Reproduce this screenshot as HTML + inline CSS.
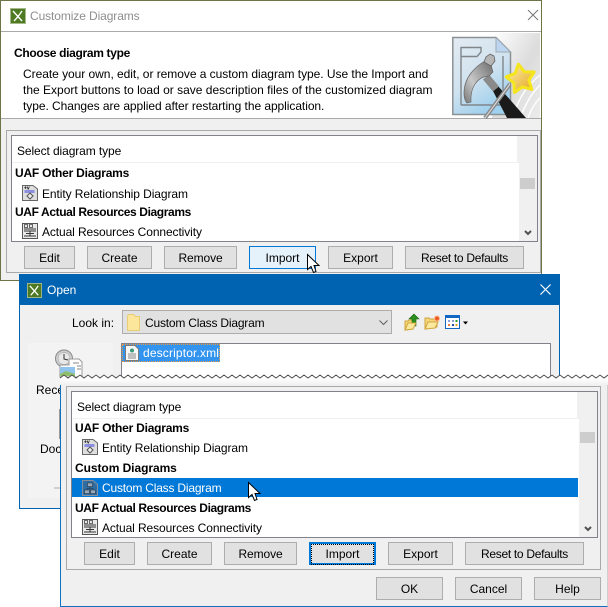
<!DOCTYPE html>
<html><head><meta charset="utf-8"><title>Customize Diagrams</title>
<style>
html,body{margin:0;padding:0;background:#fff;}
#p{position:relative;width:608px;height:607px;overflow:hidden;background:#fff;font:12px "Liberation Sans",sans-serif;color:#000;}
#p div{position:absolute;box-sizing:border-box;}
.t{white-space:nowrap;line-height:16px;height:16px;}
.b{font-weight:bold;}
.btn{height:23px;background:#e1e1e1;border:1px solid #adadad;text-align:center;line-height:23px;white-space:nowrap;}
svg{position:absolute;overflow:visible;}
</style></head><body><div id="p">

<!-- top dialog -->
<div style="left:0;top:0;width:542px;height:281px;background:#f0f0f0;border:1px solid #6f7448"></div>
<div style="left:1px;top:1px;width:540px;height:31px;background:#fff;border-bottom:1px solid #a9a9a9"></div>
<svg style="left:10px;top:8px" width="16" height="16" viewBox="0 0 16 16"><rect x=".5" y=".5" width="15" height="15" fill="#4d7a22" stroke="#a6b88a"/><path d="M3 3l9 10M12 3c-2 3-4 6-8 10" stroke="#fff" stroke-width="1.4" fill="none"/></svg>
<div class="t" style="left:30px;top:8px;color:#8e8e8e;letter-spacing:-.1px">Customize Diagrams</div>
<svg style="left:527px;top:9px" width="12" height="12"><path d="M1 1l10 10M11 1L1 11" stroke="#777" stroke-width="1" fill="none"/></svg>

<div style="left:1px;top:32px;width:540px;height:87px;background:#fff;border-bottom:1px solid #a9a9a9"></div>
<div class="t b" style="left:14px;top:45px;letter-spacing:-.32px">Choose diagram type</div>
<div class="t" style="left:23px;top:66px;letter-spacing:-.04px">Create your own, edit, or remove a custom diagram type. Use the Import and</div>
<div class="t" style="left:23px;top:82px">the Export buttons to load or save description files of the customized diagram</div>
<div class="t" style="left:23px;top:98px;letter-spacing:-.06px">type. Changes are applied after restarting the application.</div>

<!-- header art -->
<svg style="left:452px;top:33px" width="88" height="85" viewBox="0 0 88 85">
<defs>
<linearGradient id="bg" x1="0" y1="0" x2="1" y2="1"><stop offset="0" stop-color="#fff"/><stop offset=".55" stop-color="#dcdcdc"/><stop offset="1" stop-color="#ececec"/></linearGradient>
<linearGradient id="dc" x1="0" y1="0" x2=".5" y2="1"><stop offset="0" stop-color="#e4ebf2"/><stop offset=".6" stop-color="#cfe2ef"/><stop offset="1" stop-color="#9fd0ee"/></linearGradient>
<linearGradient id="hm" x1="0" y1="1" x2="1" y2="0"><stop offset="0" stop-color="#777"/><stop offset=".4" stop-color="#c8c8c8"/><stop offset="1" stop-color="#6a6a6a"/></linearGradient>
<linearGradient id="st" x1="0" y1="0" x2="1" y2="1"><stop offset="0" stop-color="#fff2b0"/><stop offset="1" stop-color="#e2a41c"/></linearGradient>
</defs>
<rect x="40" width="48" height="85" fill="url(#bg)"/>
<path d="M60 85C68 62 76 52 88 42M68 85C75 68 80 60 88 52M76 85c3-8 6-14 12-20" stroke="#fff" stroke-width="1.4" fill="none"/>
<path d="M.8 4.500H44L58.500 19V81.500H.8Z" fill="url(#dc)" stroke="#8c9196" stroke-width="1.500"/>
<path d="M44 4.500V19H58.500Z" fill="#bcd6f2" stroke="#a0a8b0"/>
<path d="M9 72V14.500H29V19L25 23.500H9M9 72H51V23" fill="none" stroke="#80858a" stroke-width="1.400"/>
<path d="M41 58L46 53 74 85H55Z" fill="#1a1a1a"/>
<path d="M34 44L44 56" stroke="#8a8a8a" stroke-width="8"/>
<path d="M33 28C24 33 12 44 12 60c0 5 1 8 3 10l4-1C18 56 24 44 37 43l4-4-2-7z" fill="url(#hm)" stroke="#666" stroke-width=".7"/>
<path d="M32 29l2-5 4-3 4 2 1 5-4 5z" fill="#b5b5b5" stroke="#555" stroke-width=".7"/>
<path d="M33 85L58 51" stroke="#8a8a8a" stroke-width="4"/>
<path d="M33 85L58 51" stroke="#e0e0e0" stroke-width="1"/>
<path d="M66.400 31.200L72.500 38.800 82.200 39 76.900 47.100 79.800 56.400 70.400 53.900 62.400 59.500 61.900 49.800 54.100 43.900 63.200 40.400Z" fill="url(#st)" stroke="#f5e51c" stroke-width="3" stroke-linejoin="round"/>
</svg>

<div style="left:6px;top:130px;width:535px;height:143px;border:1px solid #a9a9a9"></div>
<div style="left:11px;top:135px;width:527px;height:107px;background:#fff;border:1px solid #82838a"></div>
<div style="left:12px;top:162px;width:505px;height:1px;background:#f0f0f0"></div>
<div style="left:517px;top:136px;width:20px;height:105px;background:#f0f0f0"></div>
<div style="left:517px;top:163px;width:2px;height:78px;background:#fff"></div>
<div style="left:520px;top:178px;width:15px;height:11px;background:#cdcdcd"></div>
<svg style="left:524px;top:230px" width="8" height="7"><path d="M1 1l3 3 3-3" stroke="#505050" stroke-width="2" fill="none"/></svg>
<div class="t" style="left:17px;top:143px;letter-spacing:-.1px">Select diagram type</div>
<div class="t b" style="left:15px;top:165px;letter-spacing:-.22px">UAF Other Diagrams</div>
<svg style="left:22px;top:185px" width="16" height="16" viewBox="0 0 16 16"><path d="M.5.5H11l4.500 3.500V15.500H.5Z" fill="#dedede" stroke="#666"/><path d="M2.500 5h10V8h-10Z" fill="#8c8ee0"/><path d="M8 8l3 3-3 3-3-3z" fill="#eee" stroke="#555"/><text x="2" y="4.500" font-size="5" font-weight="bold">+v</text></svg>
<div class="t" style="left:42px;top:186px;letter-spacing:-.08px">Entity Relationship Diagram</div>
<div class="t b" style="left:15px;top:204px;letter-spacing:-.38px">UAF Actual Resources Diagrams</div>
<svg style="left:22px;top:223px" width="16" height="16" viewBox="0 0 16 16"><path d="M.5.5H15.500V15.500H.5Z" fill="#e9e9e9" stroke="#555"/><path d="M2 8h12M2 13h12M8 8v5M4 10.500h8M2 6h12" stroke="#333" fill="none"/><path d="M2.500 1.500h3v3h-3zM7.500 1.500h3v3h-3z" fill="none" stroke="#444" stroke-width=".8"/></svg>
<div class="t" style="left:42px;top:224px;letter-spacing:-.1px">Actual Resources Connectivity</div>

<div class="btn" style="left:24px;top:246px;width:51px">Edit</div>
<div class="btn" style="left:87px;top:246px;width:65px">Create</div>
<div class="btn" style="left:164px;top:246px;width:73px;letter-spacing:-.1px">Remove</div>
<div class="btn" style="left:249px;top:246px;width:67px;background:#e5f1fb;border-color:#0078d7">Import</div>
<div class="btn" style="left:328px;top:246px;width:65px">Export</div>
<div class="btn" style="left:405px;top:246px;width:119px;letter-spacing:-.3px">Reset to Defaults</div>
<svg style="left:307px;top:254px" width="15" height="20"><path d="M.500.500V15.500L4 12.500 6.500 18.500 9 17.500 7 11.500H12Z" fill="#fff" stroke="#000"/></svg>

<!-- open dialog -->
<div style="left:19px;top:274px;width:541px;height:235px;background:#f0f0f0;border:1px solid #0063b1;border-top:0"></div>
<div style="left:19px;top:274px;width:541px;height:31px;background:#0063b1"></div>
<svg style="left:27px;top:283px" width="15" height="15" viewBox="0 0 16 16"><rect x=".5" y=".5" width="15" height="15" fill="#4d7a22" stroke="#a6b88a"/><path d="M3 3l9 10M12 3c-2 3-4 6-8 10" stroke="#fff" stroke-width="1.4" fill="none"/></svg>
<div class="t" style="left:47px;top:282px;color:#fff">Open</div>
<svg style="left:540px;top:284px" width="11" height="11"><path d="M.500.500l10 10M10.500.500l-10 10" stroke="#fff" stroke-width="1.200" fill="none"/></svg>

<div class="t" style="left:72px;top:315px">Look in:</div>
<div style="left:122px;top:310px;width:270px;height:24px;background:#e1e1e1;border:1px solid #adadad"></div>
<svg style="left:127px;top:314px" width="14" height="17"><path d="M.500 2.500q0-2 2-2h4l2 2h4v14H.500Z" fill="#fbe69c" stroke="#e8cd72"/></svg>
<div class="t" style="left:145px;top:315px;letter-spacing:-.2px">Custom Class Diagram</div>
<svg style="left:379px;top:320px" width="9" height="6"><path d="M.500.500L4.500 4.500 8.500.500" stroke="#666" fill="none" stroke-width="1.100"/></svg>

<svg style="left:404px;top:313px" width="16" height="18"><path d="M1 8h3l1-1h4v9l-8 1z" fill="#f3d77a" stroke="#d0a63c"/><path d="M10 1L5 6H8V13H12V6H15Z" fill="#2a8f1c" stroke="#17650f" stroke-width=".6"/><path d="M1 17l3-7h8l-3 6z" fill="#fbe9a0" stroke="#d0a63c"/></svg>
<svg style="left:424px;top:315px" width="18" height="15"><path d="M1 3h4l1 1h7v8l-12 2z" fill="#f3d77a" stroke="#d0a63c"/><path d="M1 14l3-7h10l-3 6z" fill="#fbe9a0" stroke="#d0a63c"/><circle cx="13" cy="3.500" r="2.500" fill="#ee5a24" stroke="#fbb98a"/></svg>
<svg style="left:445px;top:315px" width="24" height="15"><rect x=".5" y=".5" width="14" height="13" fill="#fff" stroke="#1068c4"/><rect x="1" y="1" width="13" height="2" fill="#1068c4"/><path d="M3 5h2v2H3z" fill="#8aa0d8"/><path d="M7 5h2v2H7z" fill="#8aa0d8"/><path d="M10.500 5h2v2h-2z" fill="#2a9a2a"/><path d="M3 9h2v2H3z" fill="#ee7a3c"/><path d="M7 9h2v2H7z" fill="#1c4fa0"/><path d="M10.500 9h2v2h-2z" fill="#dca520"/><path d="M18 6.500h5l-2.500 3z" fill="#000"/></svg>

<div style="left:28px;top:343px;width:85px;height:155px;background:#f3f3f3"></div>
<svg style="left:55px;top:350px" width="30" height="28" viewBox="0 0 30 28"><circle cx="9" cy="8.500" r="8.500" fill="#cfcfcf" stroke="#888"/><circle cx="9" cy="8.500" r="6" fill="#e8e8e8" stroke="#999" stroke-width=".5"/><path d="M9 4v5l4 1" stroke="#333" fill="none"/><path d="M14 9h10l3 3v15H5V15h9z" fill="#fdfdfd" stroke="#9a9a9a"/><rect x="5" y="17" width="15" height="9" fill="#8ec3ee"/><path d="M5 24l6-3 9 3v2H5z" fill="#8fbf6c"/><path d="M18 13h6M22 16h4M22 19h4" stroke="#888"/></svg>
<div class="t" style="left:36px;top:382px">Recent Items</div>
<div style="left:59px;top:409px;width:1px;height:30px;background:#999"></div>
<div class="t" style="left:40px;top:441px">Documents</div>
<svg style="left:54px;top:484px" width="7" height="8"><path d="M0 4h6" stroke="#c4c4c4" stroke-width="1.500"/></svg>

<div style="left:121px;top:343px;width:430px;height:150px;background:#fff;border:1px solid #82838a"></div>
<div style="left:122px;top:344px;width:98px;height:18px;background:#3394f0;border:1px dotted #ec9a3e"></div>
<svg style="left:125px;top:345px" width="14" height="16"><path d="M.500.500H10L13.500 4V15.500H.500Z" fill="#f8f8f8" stroke="#7b7b7b"/><circle cx="7" cy="5.500" r="2" fill="#3a9a7a"/><path d="M3 9h8M3 11h8M3 13h8" stroke="#888"/></svg>
<div class="t" style="left:143px;top:345px;color:#fff;letter-spacing:.15px">descriptor.xml</div>

<!-- second overlay -->
<div style="left:60px;top:378px;width:548px;height:229px;background:#f0f0f0;border:1px solid #1170c0;border-top:0;border-right-color:#cfcfcf"></div>
<svg style="left:60px;top:371px" width="548" height="14" viewBox="0 0 548 14">
<defs><linearGradient id="wg" x1="0" y1="0" x2="0" y2="1"><stop offset=".3" stop-color="#fff"/><stop offset="1" stop-color="#f0f0f0"/></linearGradient></defs>
<path fill="url(#wg)" stroke="none" d="M0 14V7L4 4 8 7 12 4 16 7 20 4 24 7 28 4 32 7 36 4 40 7 44 4 48 7 52 4 56 7 60 4 64 7 68 4 72 7 76 4 80 7 84 4 88 7 92 4 96 7 100 4 104 7 108 4 112 7 116 4 120 7 124 4 128 7 132 4 136 7 140 4 144 7 148 4 152 7 156 4 160 7 164 4 168 7 172 4 176 7 180 4 184 7 188 4 192 7 196 4 200 7 204 4 208 7 212 4 216 7 220 4 224 7 228 4 232 7 236 4 240 7 244 4 248 7 252 4 256 7 260 4 264 7 268 4 272 7 276 4 280 7 284 4 288 7 292 4 296 7 300 4 304 7 308 4 312 7 316 4 320 7 324 4 328 7 332 4 336 7 340 4 344 7 348 4 352 7 356 4 360 7 364 4 368 7 372 4 376 7 380 4 384 7 388 4 392 7 396 4 400 7 404 4 408 7 412 4 416 7 420 4 424 7 428 4 432 7 436 4 440 7 444 4 448 7 452 4 456 7 460 4 464 7 468 4 472 7 476 4 480 7 484 4 488 7 492 4 496 7 500 4 504 7 508 4 512 7 516 4 520 7 524 4 528 7 532 4 536 7 540 4 544 7 548 4V14Z"/>
<path fill="none" stroke="#444" stroke-width=".9" d="M0 7L4 4 8 7 12 4 16 7 20 4 24 7 28 4 32 7 36 4 40 7 44 4 48 7 52 4 56 7 60 4 64 7 68 4 72 7 76 4 80 7 84 4 88 7 92 4 96 7 100 4 104 7 108 4 112 7 116 4 120 7 124 4 128 7 132 4 136 7 140 4 144 7 148 4 152 7 156 4 160 7 164 4 168 7 172 4 176 7 180 4 184 7 188 4 192 7 196 4 200 7 204 4 208 7 212 4 216 7 220 4 224 7 228 4 232 7 236 4 240 7 244 4 248 7 252 4 256 7 260 4 264 7 268 4 272 7 276 4 280 7 284 4 288 7 292 4 296 7 300 4 304 7 308 4 312 7 316 4 320 7 324 4 328 7 332 4 336 7 340 4 344 7 348 4 352 7 356 4 360 7 364 4 368 7 372 4 376 7 380 4 384 7 388 4 392 7 396 4 400 7 404 4 408 7 412 4 416 7 420 4 424 7 428 4 432 7 436 4 440 7 444 4 448 7 452 4 456 7 460 4 464 7 468 4 472 7 476 4 480 7 484 4 488 7 492 4 496 7 500 4 504 7 508 4 512 7 516 4 520 7 524 4 528 7 532 4 536 7 540 4 544 7 548 4"/>
</svg>

<div style="left:66px;top:386px;width:535px;height:184px;border:1px solid #a9a9a9"></div>
<div style="left:71px;top:391px;width:527px;height:147px;background:#fff;border:1px solid #82838a"></div>
<div style="left:72px;top:418px;width:505px;height:1px;background:#f0f0f0"></div>
<div style="left:577px;top:392px;width:20px;height:145px;background:#f0f0f0"></div>
<div style="left:577px;top:419px;width:2px;height:118px;background:#fff"></div>
<div style="left:580px;top:432px;width:15px;height:11px;background:#cdcdcd"></div>
<svg style="left:584px;top:526px" width="8" height="7"><path d="M1 1l3 3 3-3" stroke="#505050" stroke-width="2" fill="none"/></svg>
<div class="t" style="left:77px;top:399px;letter-spacing:-.1px">Select diagram type</div>
<div class="t b" style="left:75px;top:420px;letter-spacing:-.22px">UAF Other Diagrams</div>
<svg style="left:82px;top:439px" width="16" height="16" viewBox="0 0 16 16"><path d="M.5.5H11l4.500 3.500V15.500H.5Z" fill="#dedede" stroke="#666"/><path d="M2.500 5h10V8h-10Z" fill="#8c8ee0"/><path d="M8 8l3 3-3 3-3-3z" fill="#eee" stroke="#555"/><text x="2" y="4.500" font-size="5" font-weight="bold">+v</text></svg>
<div class="t" style="left:102px;top:440px;letter-spacing:-.08px">Entity Relationship Diagram</div>
<div class="t b" style="left:75px;top:460px;letter-spacing:-.06px">Custom Diagrams</div>
<div style="left:72px;top:478px;width:506px;height:19px;background:#0078d7"></div>
<svg style="left:82px;top:480px" width="16" height="16" viewBox="0 0 16 16"><path d="M.500.500H11l4.500 4V15.500H.500Z" fill="#2f6da3" stroke="#87909a"/><path d="M5.500 3h5v3.500h-5zM2.500 10h5v3.500h-5zM8.500 10h5v3.500h-5z" fill="#97a9ba" stroke="#26323e" stroke-width=".6"/><path d="M8 6.500V8.500H5V10M8 8.500h3V10" stroke="#26323e" fill="none" stroke-width=".6"/></svg>
<div class="t" style="left:102px;top:480px;color:#fff;letter-spacing:-.2px">Custom Class Diagram</div>
<svg style="left:248px;top:482px" width="15" height="20"><path d="M.500.500V15.500L4 12.500 6.500 18.500 9 17.500 7 11.500H12Z" fill="#fff" stroke="#000"/></svg>
<div class="t b" style="left:75px;top:500px;letter-spacing:-.38px">UAF Actual Resources Diagrams</div>
<svg style="left:82px;top:519px" width="16" height="16" viewBox="0 0 16 16"><path d="M.5.5H15.500V15.500H.5Z" fill="#e9e9e9" stroke="#555"/><path d="M2 8h12M2 13h12M8 8v5M4 10.500h8M2 6h12" stroke="#333" fill="none"/><path d="M2.500 1.500h3v3h-3zM7.500 1.500h3v3h-3z" fill="none" stroke="#444" stroke-width=".8"/></svg>
<div class="t" style="left:102px;top:520px;letter-spacing:-.1px">Actual Resources Connectivity</div>

<div class="btn" style="left:84px;top:542px;width:51px">Edit</div>
<div class="btn" style="left:147px;top:542px;width:65px">Create</div>
<div class="btn" style="left:224px;top:542px;width:73px;letter-spacing:-.1px">Remove</div>
<div class="btn" style="left:309px;top:542px;width:67px;border:2px solid #0078d7"><span style="display:block;height:19px;border:1px dotted #000;line-height:19px">Import</span></div>
<div class="btn" style="left:388px;top:542px;width:65px">Export</div>
<div class="btn" style="left:465px;top:542px;width:119px;letter-spacing:-.3px">Reset to Defaults</div>
<div class="btn" style="left:376px;top:577px;width:67px">OK</div>
<div class="btn" style="left:455px;top:577px;width:67px">Cancel</div>
<div class="btn" style="left:534px;top:577px;width:67px">Help</div>
</div></body></html>
